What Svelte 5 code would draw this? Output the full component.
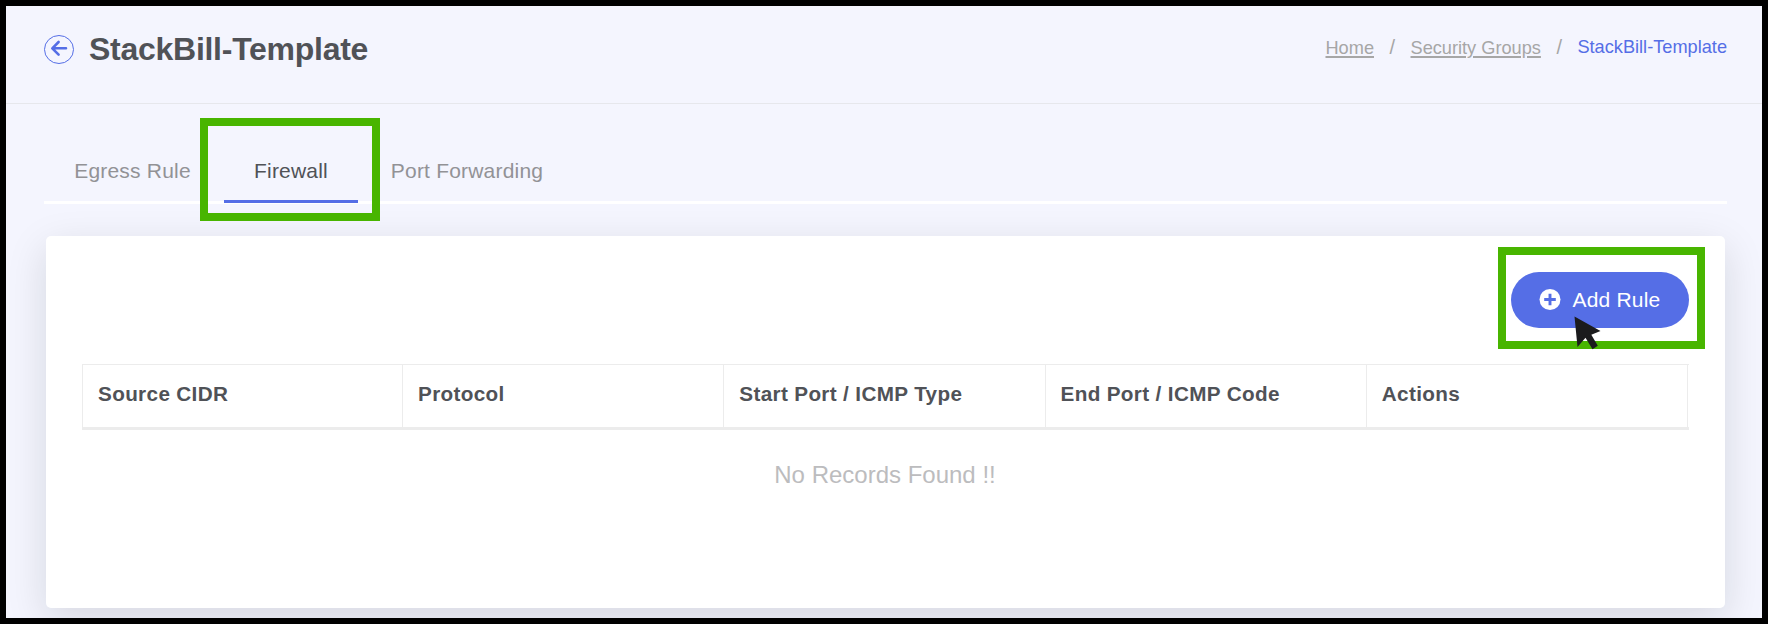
<script>
  const columns = ['Source CIDR', 'Protocol', 'Start Port / ICMP Type', 'End Port / ICMP Code', 'Actions'];
</script>

<div class="screen">
  <header>
    <div class="heading">
      <svg class="back" width="30" height="30" viewBox="0 0 30 30" fill="none" stroke="#556ee6">
        <ellipse cx="15" cy="14.5" rx="14.5" ry="14" stroke-width="1" />
        <path d="M22 13.3H8.8M14.6 7L8.3 13.3L14.6 19.6" stroke-width="2.6" stroke-linecap="round" stroke-linejoin="round" />
      </svg>
      <h1>StackBill-Template</h1>
    </div>
    <nav class="crumbs">
      <a class="home">Home</a><span class="sep">/</span><a class="groups">Security Groups</a><span class="sep">/</span><span class="current">StackBill-Template</span>
    </nav>
  </header>

  <main>
    <div class="tabs">
      <div class="tab egress">Egress Rule</div>
      <div class="tab active">Firewall<i class="mark tabmark"></i></div>
      <div class="tab port">Port Forwarding</div>
    </div>

    <section class="card">
      <div class="toolbar">
        <div class="button">
          <svg width="22" height="22" viewBox="0 0 22 22">
            <circle cx="11" cy="10.5" r="10.5" fill="#fff" />
            <path d="M11 4.7V16.3M5.2 10.5H16.8" stroke="#556ee6" stroke-width="2.9" />
          </svg>
          <span>Add Rule</span>
          <i class="mark buttonmark"></i>
          <svg class="cursor" width="28" height="35" viewBox="0 0 28 35">
            <path d="M0.5 0.5L26.5 15L17.3 18.8L23.8 29.8L18.5 33.2L11.5 21.7L3.5 31Z" fill="#1b1b1d" />
          </svg>
        </div>
      </div>
      <div class="table">
        {#each columns as column}
          <div class="th">{column}</div>
        {/each}
      </div>
      <div class="empty">No Records Found !!</div>
    </section>
  </main>
</div>

<style>
  :global(body) { margin: 0; background: #000; }
  .screen {
    box-sizing: border-box; width: 1768px; height: 624px; overflow: hidden;
    border: 6px solid #000; background: #f4f5fe; color: #505257;
    font-family: "Liberation Sans", Arial, sans-serif;
  }
  header {
    box-sizing: border-box; height: 98px; border-bottom: 1px solid #e6e7ec;
    padding: 0 35px 0 38px; display: flex; justify-content: space-between; align-items: flex-start;
  }
  .heading { display: flex; padding-top: 23px; gap: 15px; }
  .back { margin-top: 6px; }
  h1 { margin: 0; font-size: 32px; line-height: 40px; font-weight: 700; letter-spacing: -0.27px; }
  .crumbs { display: flex; padding-top: 29px; font-size: 18.2px; line-height: 24px; color: #a6a6a6; white-space: nowrap; }
  .crumbs a { padding-top: 1px; text-decoration: underline; text-decoration-thickness: 2px; text-underline-offset: 2px; }
  .sep { width: 36.5px; text-align: center; font-size: 20px; }
  .current { color: #556ee6; }
  main { padding: 0 36px 0 38px; }
  .tabs { display: flex; height: 97px; border-bottom: 3px solid #fff; margin-right: -1px; }
  .tab {
    box-sizing: border-box; position: relative; height: 99px; padding-top: 55px;
    text-align: center; font-size: 21px; line-height: 24px; letter-spacing: 0.2px; color: #929296;
  }
  .egress { width: 180px; padding-right: 3px; }
  .active { width: 134px; border-bottom: 3px solid #556ee6; color: #505257; }
  .port { width: 218px; }
  .mark { position: absolute; box-sizing: border-box; border: 8px solid #48b500; }
  .tabmark { left: -24px; top: 14px; width: 180px; height: 103px; }
  .card {
    box-sizing: border-box; height: 372px; margin: 32px 1px 0 2px; padding: 36px 37px 0 36px;
    background: #fff; border-radius: 5px; box-shadow: 0 12px 40px rgba(18, 24, 20, 0.13);
  }
  .toolbar { display: flex; justify-content: flex-end; height: 92px; }
  .button {
    position: relative; box-sizing: border-box; width: 178px; height: 56px; border-radius: 28px; margin-right: -1px;
    padding-left: 28px; display: flex; align-items: center; gap: 11.5px;
    background: #556ee6; color: #fff; font-size: 21px; letter-spacing: 0.2px;
  }
  .buttonmark { left: -13px; top: -25px; width: 207px; height: 102px; }
  .cursor { position: absolute; left: 63px; top: 44px; }
  .table {
    display: grid; grid-template-columns: 320px repeat(4, 1fr); height: 62px; margin-right: -1px; padding-right: 1px;
    border-top: 1px solid #ececec; border-bottom: 3px solid #ececec; border-left: 1px solid #ececec;
  }
  .th {
    border-right: 1px solid #ececec; padding: 17px 0 0 15px;
    font-size: 20.7px; line-height: 24px; font-weight: 700; letter-spacing: 0.35px; white-space: nowrap;
  }
  .empty { padding-top: 31px; text-align: center; font-size: 24px; line-height: 28px; color: #bcbcbe; }
</style>
